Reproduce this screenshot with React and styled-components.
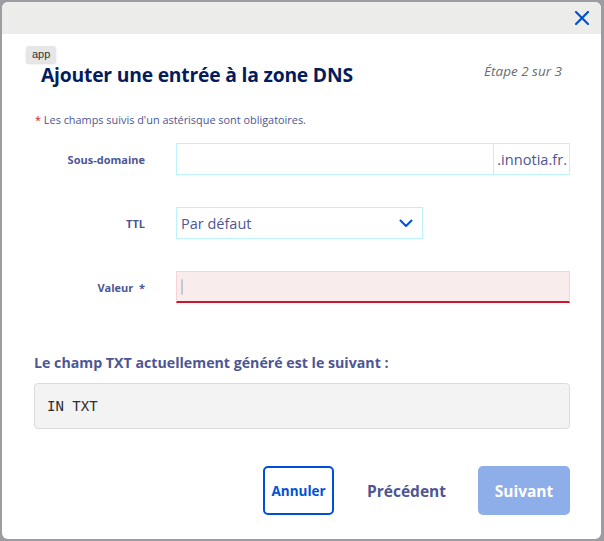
import React from "react";
import styled, { createGlobalStyle } from "styled-components";

const Global = createGlobalStyle`
  html, body { margin: 0; padding: 0; }
  body { background: #9c9ca2; font-family: "Open Sans", Lato, sans-serif; }
`;

const Backdrop = styled.div`
  width: 604px;
  height: 541px;
  box-sizing: border-box;
  padding: 2px 3px 2px 2px;
  background: #9c9ca2;
  overflow: hidden;
`;

const Modal = styled.div`
  width: 599px;
  height: 537px;
  background: #fff;
  border-radius: 6px;
  overflow: hidden;
  display: flex;
  flex-direction: column;
`;

const TopBar = styled.div`
  height: 32px;
  background: #ecedeb;
  display: flex;
  justify-content: flex-end;
  align-items: center;
  padding-right: 10px;
`;

const CloseBtn = styled.button`
  border: 0;
  background: transparent;
  padding: 0;
  width: 18px;
  height: 18px;
  display: flex;
  align-items: center;
  justify-content: center;
  cursor: pointer;
`;

const Body = styled.div`
  padding: 12px 31px 0 32px;
  display: flex;
  flex-direction: column;
  position: relative;
`;

const Badge = styled.span`
  position: absolute;
  left: 24px;
  top: 12px;
  background: #e6e6e6;
  color: #333;
  font-family: "Liberation Sans", Arial, sans-serif;
  font-size: 11px;
  padding: 2px 6px 3px;
  border-radius: 3px;
  box-shadow: 0 1px 2px rgba(0,0,0,0.15);
`;

const Header = styled.div`
  display: flex;
  justify-content: space-between;
  align-items: baseline;
  padding: 15px 8px 0 7px;
`;

const Title = styled.h2`
  margin: 0;
  font-size: 19.3px;
  font-weight: 700;
  color: #041c5c;
  letter-spacing: -0.2px;
`;

const Step = styled.span`
  font-size: 13.5px;
  font-style: italic;
  color: #6b6b70;
  position: relative;
  top: -6px;
`;

const Required = styled.p`
  margin: 24px 0 0 1px;
  font-size: 10.9px;
  color: #4d5693;
`;

const Star = styled.span`
  color: #d0142c;
`;

const Row = styled.div`
  display: grid;
  grid-template-columns: 111px 1fr;
  column-gap: 31px;
  align-items: center;
  margin-top: ${(p) => p.$mt}px;
`;

const Label = styled.label`
  text-align: right;
  font-size: 11px;
  font-weight: 700;
  color: #4d5693;
`;

const Group = styled.div`
  display: flex;
  height: 32px;
  border: 1px solid #bcf2fb;
  box-sizing: border-box;
`;

const TextInput = styled.input`
  flex: 1;
  border: 0;
  outline: none;
  background: transparent;
  font-family: inherit;
  font-size: 14px;
  padding: 0 6px;
  min-width: 0;
`;

const Addon = styled.span`
  border-left: 1px solid #bcf2fb;
  display: flex;
  align-items: center;
  padding: 0 2px 0 3px;
  font-size: 14.6px;
  color: #4d5693;
`;

const SelectBox = styled.div`
  display: flex;
  align-items: center;
  justify-content: space-between;
  height: 32px;
  width: 247px;
  box-sizing: border-box;
  border: 1px solid #bcf2fb;
  padding: 0 9px 0 4px;
  font-size: 14.5px;
  color: #4d5693;
`;

const ErrorInput = styled.div`
  height: 32px;
  box-sizing: border-box;
  background: #f8ecec;
  border: 1px solid #f5d5d7;
  border-bottom: 2px solid #d0142c;
  display: flex;
  align-items: center;
  padding-left: 4px;
`;

const Caret = styled.span`
  width: 2px;
  height: 16px;
  background: #c8c8d4;
  border-radius: 1px;
`;

const SectionTitle = styled.h3`
  margin: 50px 0 0 0;
  font-size: 14.2px;
  font-weight: 700;
  color: #4d5693;
`;

const CodeBox = styled.div`
  margin-top: 11px;
  height: 46px;
  box-sizing: border-box;
  background: #f3f3f3;
  border: 1px solid #dcdcdc;
  border-radius: 4px;
  display: flex;
  align-items: center;
  padding-left: 12px;
  font-family: "DejaVu Sans Mono", monospace;
  font-size: 14px;
  color: #2e2e2e;
`;

const Actions = styled.div`
  display: flex;
  justify-content: flex-end;
  align-items: center;
  margin-top: 37px;
`;

const OutlineButton = styled.button`
  height: 49px;
  width: 71px;
  box-sizing: border-box;
  border: 2px solid #0050d7;
  border-radius: 5px;
  background: #fff;
  color: #0050d7;
  font-family: inherit;
  font-size: 13.5px;
  font-weight: 700;
  padding: 0;
`;

const LinkButton = styled.button`
  border: 0;
  background: transparent;
  color: #4d5693;
  font-family: inherit;
  font-size: 15.5px;
  font-weight: 700;
  margin: 0 32px 0 33px;
  padding: 0;
`;

const PrimaryButton = styled.button`
  height: 49px;
  width: 92px;
  border: 0;
  border-radius: 5px;
  background: #8eaeea;
  color: #fff;
  font-family: inherit;
  font-size: 15.5px;
  font-weight: 700;
  padding: 0;
`;

export default function App() {
  return (
    <>
      <Global />
      <Backdrop>
        <Modal>
          <TopBar>
            <CloseBtn aria-label="Fermer">
              <svg width="14" height="14" viewBox="0 0 14 14">
                <path d="M1 1 L13 13 M13 1 L1 13" stroke="#0050d7" strokeWidth="2.2" strokeLinecap="square" />
              </svg>
            </CloseBtn>
          </TopBar>
          <Body>
            <Badge>app</Badge>
            <Header>
              <Title>Ajouter une entrée à la zone DNS</Title>
              <Step>Étape 2 sur 3</Step>
            </Header>
            <Required>
              <Star>*</Star> Les champs suivis d'un astérisque sont obligatoires.
            </Required>
            <Row $mt={16}>
              <Label>Sous-domaine</Label>
              <Group>
                <TextInput />
                <Addon>.innotia.fr.</Addon>
              </Group>
            </Row>
            <Row $mt={32}>
              <Label>TTL</Label>
              <SelectBox>
                <span>Par défaut</span>
                <svg width="14" height="9" viewBox="0 0 14 9">
                  <path d="M1.5 1.5 L7 7 L12.5 1.5" fill="none" stroke="#0050d7" strokeWidth="2" strokeLinecap="round" strokeLinejoin="round" />
                </svg>
              </SelectBox>
            </Row>
            <Row $mt={32}>
              <Label>Valeur&nbsp; *</Label>
              <ErrorInput>
                <Caret />
              </ErrorInput>
            </Row>
            <SectionTitle>Le champ TXT actuellement généré est le suivant :</SectionTitle>
            <CodeBox>IN TXT</CodeBox>
            <Actions>
              <OutlineButton>Annuler</OutlineButton>
              <LinkButton>Précédent</LinkButton>
              <PrimaryButton>Suivant</PrimaryButton>
            </Actions>
          </Body>
        </Modal>
      </Backdrop>
    </>
  );
}
